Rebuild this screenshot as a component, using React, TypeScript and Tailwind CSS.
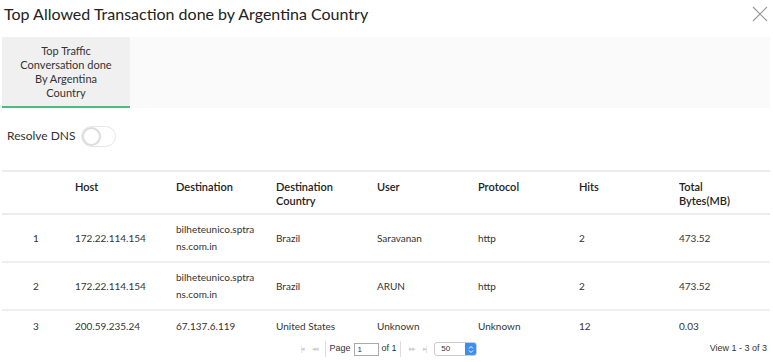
import React from 'react';

const columns = ['', 'Host', 'Destination', 'Destination Country', 'User', 'Protocol', 'Hits', 'Total Bytes(MB)'];

const rows = [
  ['1', '172.22.114.154', 'bilheteunico.sptrans.com.in', 'Brazil', 'Saravanan', 'http', '2', '473.52'],
  ['2', '172.22.114.154', 'bilheteunico.sptrans.com.in', 'Brazil', 'ARUN', 'http', '2', '473.52'],
  ['3', '200.59.235.24', '67.137.6.119', 'United States', 'Unknown', 'Unknown', '12', '0.03'],
];

const widths = [73, 101, 100, 101, 101, 101, 100, 91];

function HeaderLabel({ text }: { text: string }) {
  if (text === 'Destination Country') return <>Destination<br />Country</>;
  if (text === 'Total Bytes(MB)') return <>Total<br />Bytes(MB)</>;
  return <>{text}</>;
}

export default function App() {
  return (
    <div className="w-[773px] h-[362px] overflow-hidden bg-white text-[#333] font-['Lato',sans-serif]">
      {/* Title */}
      <div className="flex items-center justify-between h-[26px] pl-[4px] pr-[5px] pt-[1px]">
        <h1 className="text-[16px] leading-[22px] text-[#222]">Top Allowed Transaction done by Argentina Country</h1>
        <svg width="16" height="16" viewBox="0 0 16 16" className="text-[#999]">
          <path d="M1 1L15 15M15 1L1 15" stroke="currentColor" strokeWidth="1.2" />
        </svg>
      </div>

      {/* Tabs */}
      <div className="mt-[11px] ml-[2px] mr-[3px] h-[71px] bg-[#fafafa] flex">
        <div className="w-[128px] h-full bg-[#f0f0f0] border-b-2 border-[#4cbb7f] flex items-center justify-center text-center text-[11px] leading-[14px] text-[#333] px-3">
          Top Traffic Conversation done By Argentina Country
        </div>
      </div>

      {/* Resolve DNS */}
      <div className="flex items-center gap-[5px] mt-[17px] ml-[7px] h-[22px]">
        <span className="text-[12px]">Resolve DNS</span>
        <div className="relative w-[35px] h-[21px] rounded-full border border-[#e6e6e6] bg-white">
          <div className="absolute left-0 top-0 w-[19px] h-[19px] rounded-full border-2 border-[#dcdcdc] bg-white" />
        </div>
      </div>

      {/* Table */}
      <table className="mt-[23px] ml-[2px] w-[768px] table-fixed border-collapse text-[10px]">
        <colgroup>
          {widths.map((w, i) => (
            <col key={i} style={{ width: w }} />
          ))}
        </colgroup>
        <thead>
          <tr className="border-t-2 border-b-2 border-[#ececec] h-[43px]">
            {columns.map((c, i) => (
              <th
                key={i}
                className={`text-left align-top pt-[8px] font-semibold text-[11px] text-[#222] leading-[14px] ${i === 0 ? 'pl-[31px]' : 'pr-2'}`}
              >
                <HeaderLabel text={c} />
              </th>
            ))}
          </tr>
        </thead>
        <tbody>
          {rows.map((r, ri) => (
            <tr key={ri} className={ri < 2 ? 'h-[48px] border-b-2 border-[#efefef]' : 'h-[32px]'}>
              {r.map((v, i) => (
                <td
                  key={i}
                  className={`align-middle leading-[17px] text-[#333] ${i === 0 ? 'pl-[31px]' : i === 2 ? 'pr-[18px] break-all' : 'pr-[4px]'}`}
                >
                  {v}
                </td>
              ))}
            </tr>
          ))}
        </tbody>
      </table>

      {/* Pager */}
      <div className="relative flex items-center justify-center h-[18px] -mt-[2px] text-[9px] text-[#333] font-['Liberation_Sans',sans-serif]">
        <div className="flex items-center ml-[5px]">
          <span className="text-[#ccc] text-[7px] tracking-[-1px] mr-[8px]">|◂</span>
          <span className="text-[#ccc] text-[7px] tracking-[-1px] mr-[7px]">◂◂</span>
          <span className="h-[16px] border-l border-[#ddd] mr-[3px]" />
          <span className="mr-[3px]">Page</span>
          <span className="w-[25px] h-[13px] border border-[#aaa] text-[8px] leading-[11px] pl-[3px] mr-[3px]">1</span>
          <span className="mr-[3px]">of 1</span>
          <span className="h-[16px] border-l border-[#ddd] mr-[8px]" />
          <span className="text-[#ccc] text-[7px] tracking-[-1px] mr-[8px]">▸▸</span>
          <span className="text-[#ccc] text-[7px] tracking-[-1px] mr-[8px]">▸|</span>
          <div className="flex items-center w-[43px] h-[14px] border border-[#ccc] rounded-[3px] overflow-hidden">
            <span className="flex-1 text-[8px] pl-[6px]">50</span>
            <span className="w-[11px] h-full bg-[#3b8ff0] flex items-center justify-center">
              <svg width="6" height="9" viewBox="0 0 6 9">
                <path d="M1 3.5L3 1.5L5 3.5M1 5.5L3 7.5L5 5.5" stroke="white" strokeWidth="1" fill="none" />
              </svg>
            </span>
          </div>
        </div>
        <span className="absolute right-[6px]">View 1 - 3 of 3</span>
      </div>
    </div>
  );
}
